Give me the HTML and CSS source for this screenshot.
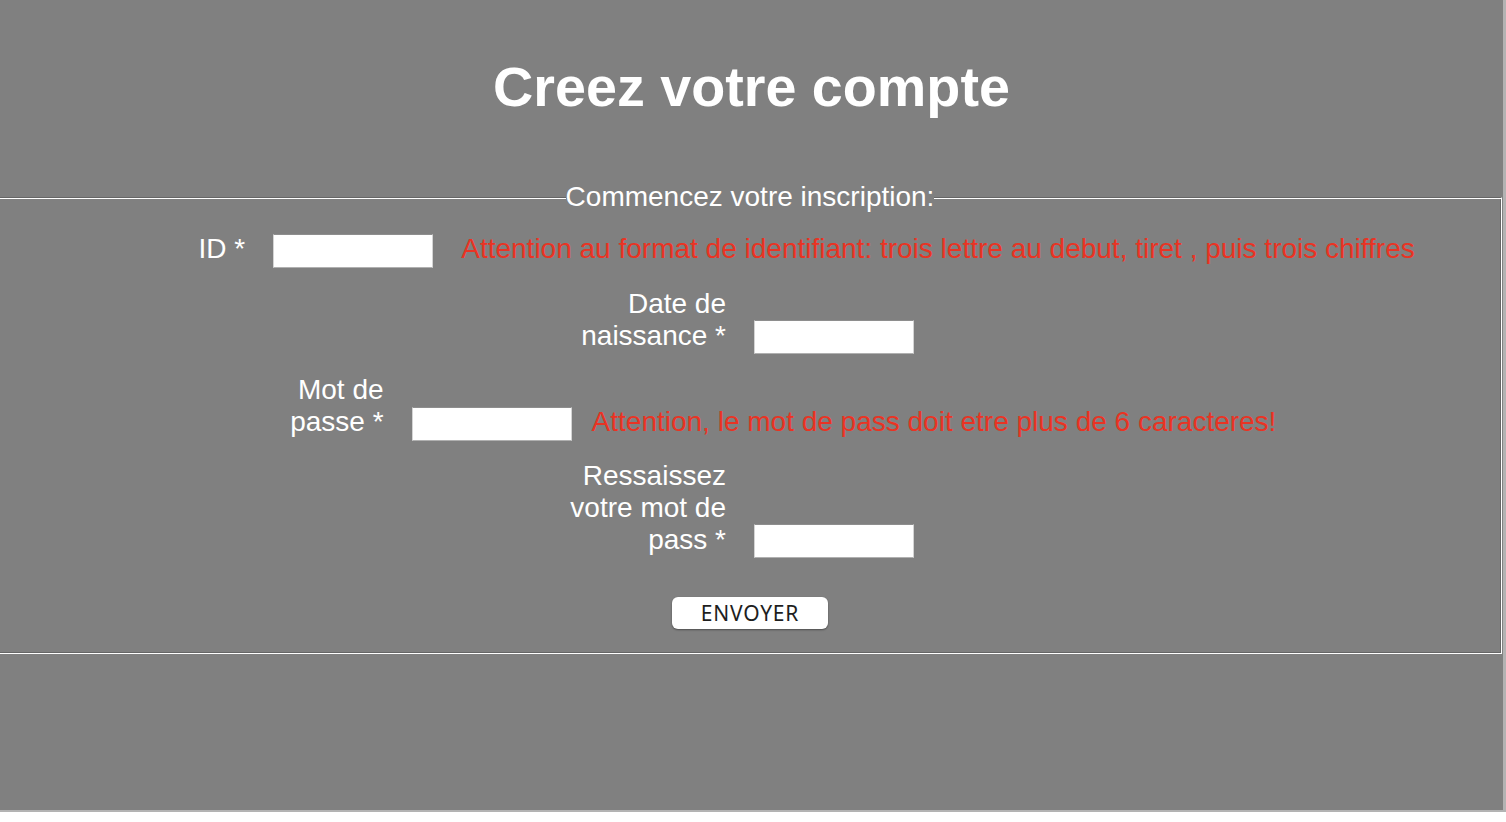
FILE: index.html
```html
<!DOCTYPE html>
<html lang="fr">
<head>
<meta charset="utf-8">
<title>Creez votre compte</title>
<link rel="stylesheet" href="styles.css">
</head>
<body>
<div class="page">
  <h1 class="title">Creez votre compte</h1>
  <form class="signup">
    <fieldset class="signup__box">
      <legend class="signup__legend">Commencez votre inscription:</legend>
      <div class="field"><label class="field__label">ID *</label><input class="field__input" type="text"><span class="field__warn field__warn--wide">Attention au format de identifiant: trois lettre au debut, tiret , puis trois chiffres</span></div>
      <div class="field"><label class="field__label">Date de naissance *</label><input class="field__input" type="text"><span class="field__warn"></span></div>
      <div class="field"><label class="field__label">Mot de passe *</label><input class="field__input" type="password"><span class="field__warn">Attention, le mot de pass doit etre plus de 6 caracteres!</span></div>
      <div class="field field--tight"><label class="field__label">Ressaissez votre mot de pass *</label><input class="field__input" type="password"><span class="field__warn"></span></div>
      <div class="actions"><button class="btn" type="submit">ENVOYER</button></div>
    </fieldset>
  </form>
</div>
</body>
</html>
```
FILE: styles.css
```css
html {
  background: #ffffff;
}

body {
  margin: 0;
  font-family: "Liberation Sans", Arial, Helvetica, sans-serif;
}

.page {
  width: 1503px;
  height: 810px;
  background: #808080;
  border-right: 3px solid #b3b3b3;
  border-bottom: 2px solid #b3b3b3;
  overflow: hidden;
  color: #ffffff;
}

.title {
  margin: 0;
  padding-top: 55px;
  font-size: 55.7px;
  font-weight: bold;
  line-height: 64px;
  text-align: center;
}

.signup {
  margin: 62px 0 0 -2px;
  width: 1504px;
}

.signup__box {
  margin: 0;
  padding: 0 0 24px;
  border: 1px solid;
  border-color: #666666 #ffffff #ffffff #666666;
  box-shadow: inset 1px 1px 0 #ffffff, inset -1px -1px 0 #666666;
  min-width: 0;
}

.signup__legend {
  margin: 0 auto;
  padding: 0;
  font-size: 28px;
  line-height: normal;
  background: #808080;
  color: #ffffff;
}

.field {
  margin-top: 20px;
  font-size: 28px;
  line-height: normal;
  text-align: center;
  white-space: nowrap;
}

.field--tight {
  margin-top: 19px;
}

.field__label {
  display: inline-block;
  width: 160px;
  text-align: right;
  white-space: normal;
  vertical-align: baseline;
}

.field__input {
  box-sizing: border-box;
  width: 160px;
  height: 34px;
  margin: 0 0 0 28px;
  padding: 0 3px;
  font-family: "Liberation Sans", Arial, sans-serif;
  font-size: 23px;
  background: #ffffff;
  border: 1px solid #d4d4d4;
  border-top-color: #8e8e8e;
  border-bottom-color: #b0b0b0;
  border-radius: 0;
  vertical-align: baseline;
}

.field__warn {
  display: inline-block;
  margin-left: 20px;
  color: #ea3323;
}

.field__warn--wide {
  margin-left: 28px;
}

.actions {
  margin-top: 39px;
  text-align: center;
  line-height: 0;
}

.btn {
  width: 156px;
  height: 32px;
  padding: 0;
  background: #ffffff;
  border: none;
  border-radius: 6px;
  box-shadow: 0 1px 2px rgba(0, 0, 0, 0.4);
  font-family: "Noto Sans", "Open Sans", sans-serif;
  font-size: 21px;
  letter-spacing: 0.8px;
  color: #1e1e1e;
  line-height: 32px;
}
```
